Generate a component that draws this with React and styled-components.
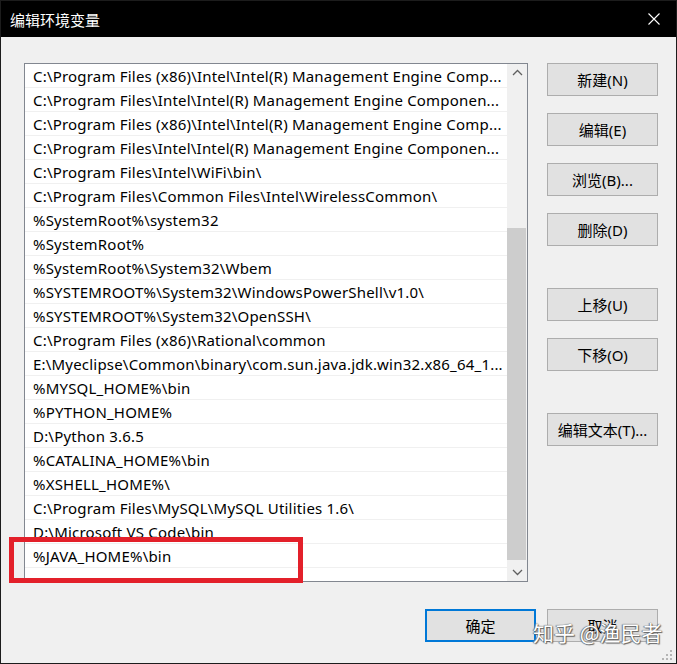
import styled, { createGlobalStyle } from "styled-components";

const paths = [
  "C:\\Program Files (x86)\\Intel\\Intel(R) Management Engine Comp...",
  "C:\\Program Files\\Intel\\Intel(R) Management Engine Componen...",
  "C:\\Program Files (x86)\\Intel\\Intel(R) Management Engine Comp...",
  "C:\\Program Files\\Intel\\Intel(R) Management Engine Componen...",
  "C:\\Program Files\\Intel\\WiFi\\bin\\",
  "C:\\Program Files\\Common Files\\Intel\\WirelessCommon\\",
  "%SystemRoot%\\system32",
  "%SystemRoot%",
  "%SystemRoot%\\System32\\Wbem",
  "%SYSTEMROOT%\\System32\\WindowsPowerShell\\v1.0\\",
  "%SYSTEMROOT%\\System32\\OpenSSH\\",
  "C:\\Program Files (x86)\\Rational\\common",
  "E:\\Myeclipse\\Common\\binary\\com.sun.java.jdk.win32.x86_64_1...",
  "%MYSQL_HOME%\\bin",
  "%PYTHON_HOME%",
  "D:\\Python 3.6.5",
  "%CATALINA_HOME%\\bin",
  "%XSHELL_HOME%\\",
  "C:\\Program Files\\MySQL\\MySQL Utilities 1.6\\",
  "D:\\Microsoft VS Code\\bin",
  "%JAVA_HOME%\\bin",
];

// 右侧按钮，gap 是和上一个按钮之间的距离
const sideButtons = [
  { label: "新建(N)", gap: 0 },
  { label: "编辑(E)", gap: 17 },
  { label: "浏览(B)...", gap: 17 },
  { label: "删除(D)", gap: 17 },
  { label: "上移(U)", gap: 42 },
  { label: "下移(O)", gap: 17 },
  { label: "编辑文本(T)...", gap: 42 },
];

const GlobalStyle = createGlobalStyle`
  html, body {
    margin: 0;
    padding: 0;
    background: #f0f0f0;
  }
  * {
    box-sizing: border-box;
  }
`;

function App() {
  return (
    <>
      <GlobalStyle />
      <Window>
        <TitleBar>
          <Title>编辑环境变量</Title>
          <CloseIcon width="12" height="12" viewBox="0 0 12 12">
            <path d="M0.5 0.5 L11.5 11.5 M11.5 0.5 L0.5 11.5" stroke="#fff" strokeWidth="1.1" fill="none" />
          </CloseIcon>
        </TitleBar>

        <Body>
          <Main>
            <ListBox>
              <Rows>
                {paths.map((p, i) => (
                  <Row key={i}>{p}</Row>
                ))}
              </Rows>
              <ScrollBar>
                <Arrow>
                  <svg width="11" height="7" viewBox="0 0 11 7">
                    <path d="M1 6 L5.5 1.5 L10 6" stroke="#606060" strokeWidth="1.3" fill="none" />
                  </svg>
                </Arrow>
                <Track $offset={147}>
                  <Thumb $size={332} />
                </Track>
                <Arrow>
                  <svg width="11" height="7" viewBox="0 0 11 7">
                    <path d="M1 1 L5.5 5.5 L10 1" stroke="#606060" strokeWidth="1.3" fill="none" />
                  </svg>
                </Arrow>
              </ScrollBar>
            </ListBox>

            <SideButtons>
              {sideButtons.map((b) => (
                <Button key={b.label} $gap={b.gap}>{b.label}</Button>
              ))}
            </SideButtons>
          </Main>

          <Footer>
            <Button $primary>确定</Button>
            <Button>取消</Button>
          </Footer>
        </Body>

        <Highlight />
        <Watermark>知乎 @渔民者</Watermark>
        <Grip width="11" height="11" viewBox="0 0 11 11">
          <rect x="8" y="0" width="2" height="2" fill="#b5b5b5" />
          <rect x="4" y="4" width="2" height="2" fill="#b5b5b5" />
          <rect x="8" y="4" width="2" height="2" fill="#b5b5b5" />
          <rect x="0" y="8" width="2" height="2" fill="#b5b5b5" />
          <rect x="4" y="8" width="2" height="2" fill="#b5b5b5" />
          <rect x="8" y="8" width="2" height="2" fill="#b5b5b5" />
        </Grip>
      </Window>
    </>
  );
}

export default App;

const Window = styled.div`
  position: relative;
  width: 677px;
  height: 664px;
  background: #f0f0f0;
  border: 1px solid #1c1c1c;
  font-family: "Noto Sans", "Noto Sans CJK SC", sans-serif;
  color: #000;
  overflow: hidden;
`;

const TitleBar = styled.div`
  height: 36px;
  background: #000;
  display: flex;
  align-items: center;
  justify-content: space-between;
  padding: 0 16px 0 9px;
`;

const Title = styled.div`
  color: #fff;
  font-size: 15px;
  font-family: "Noto Sans CJK SC", sans-serif;
`;

const CloseIcon = styled.svg`
  display: block;
`;

const Body = styled.div`
  padding: 26px 18px 0 23px;
`;

const Main = styled.div`
  display: flex;
  gap: 19px;
`;

const ListBox = styled.div`
  width: 504px;
  height: 519px;
  border: 1px solid #828790;
  background: #fff;
  display: flex;
`;

const Rows = styled.div`
  flex: 1;
  overflow: hidden;
`;

const Row = styled.div`
  height: 24px;
  border-bottom: 1px solid #f0f0f0;
  padding: 2px 0 0 8px;
  font-size: 15px;
  letter-spacing: 0.2px;
  line-height: 21px;
  white-space: nowrap;
  overflow: hidden;
`;

const ScrollBar = styled.div`
  width: 20px;
  background: #f0f0f0;
  display: flex;
  flex-direction: column;
`;

const Arrow = styled.div`
  height: 17px;
  display: flex;
  align-items: center;
  justify-content: center;

  svg {
    display: block;
  }
`;

const Track = styled.div`
  flex: 1;
  padding-top: ${(p) => p.$offset}px;
`;

const Thumb = styled.div`
  height: ${(p) => p.$size}px;
  background: #cdcdcd;
  margin-right: 1px;
`;

const SideButtons = styled.div`
  display: flex;
  flex-direction: column;
  width: 111px;
`;

const Button = styled.div`
  width: 111px;
  height: 33px;
  margin-top: ${(p) => p.$gap || 0}px;
  background: #e1e1e1;
  border: ${(p) => (p.$primary ? "2px solid #0078d7" : "1px solid #adadad")};
  display: flex;
  align-items: center;
  justify-content: center;
  font-size: 15px;
  font-family: "Noto Sans", "Noto Sans CJK SC", sans-serif;
`;

const Footer = styled.div`
  display: flex;
  justify-content: flex-end;
  gap: 11px;
  margin-top: 27px;
`;

const Highlight = styled.div`
  position: absolute;
  left: 8px;
  top: 536px;
  width: 294px;
  height: 46px;
  border: 5px solid #e3202a;
`;

const Watermark = styled.div`
  position: absolute;
  left: 532px;
  top: 616px;
  font-family: "Noto Sans CJK SC", sans-serif;
  font-size: 21px;
  color: #fff;
  text-shadow: 0 0 1px #444, 1px 1px 1px #666, -1px 0 1px #888;
  white-space: nowrap;
`;

const Grip = styled.svg`
  position: absolute;
  right: 3px;
  bottom: 2px;
`;
